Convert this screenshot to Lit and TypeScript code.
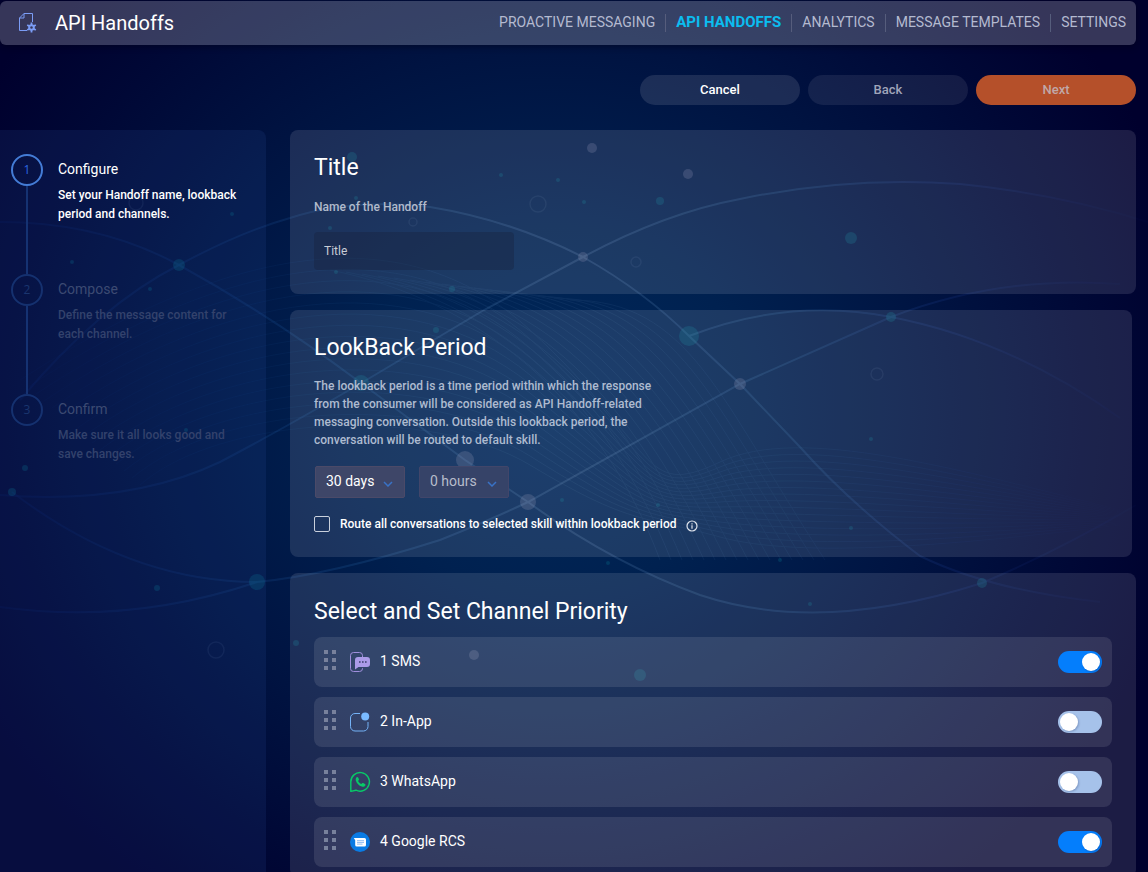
import { LitElement, html, svg, css } from "lit";
import { customElement, property, state } from "lit/decorators.js";
import { classMap } from "lit/directives/class-map.js";

const FAN = Array.from({ length: 16 }, (_, i) => i);

const DOTS: [number, number, number, string][] = [
  [592, 148, 5, "pale"], [688, 174, 5, "pale"], [583, 257, 5, "pale"],
  [740, 384, 6, "pale"], [528, 502, 8, "pale"], [465, 460, 9, "pale"],
  [474, 655, 5, "pale"], [851, 238, 6, "teal"], [689, 336, 10, "teal"],
  [891, 317, 5, "teal"], [361, 383, 8, "teal"], [179, 265, 6, "teal"],
  [257, 582, 8, "teal"], [982, 583, 5, "teal"], [640, 675, 6, "teal"],
  [352, 157, 5, "teal"], [660, 201, 4, "teal"], [356, 198, 2, "teal"],
  [330, 228, 2, "teal"], [336, 272, 2, "teal"], [452, 289, 3, "teal"],
  [501, 175, 2, "teal"], [558, 180, 2, "teal"], [584, 202, 2, "teal"],
  [436, 330, 3, "teal"], [157, 588, 3, "teal"], [296, 643, 3, "teal"],
  [232, 214, 2, "teal"], [150, 289, 2, "teal"], [72, 262, 2, "teal"],
  [658, 505, 2, "teal"], [562, 500, 2, "teal"], [851, 528, 2, "teal"],
  [780, 560, 2, "teal"], [608, 563, 2, "teal"], [810, 604, 2, "teal"],
  [871, 439, 2, "teal"], [25, 468, 3, "teal"], [186, 430, 2, "teal"],
  [12, 492, 4, "teal"],
];

@customElement("network-backdrop")
class NetworkBackdrop extends LitElement {
  static styles = css`
    :host {
      display: block;
      background: radial-gradient(
        ellipse 58% 70% at 48% 47%,
        #00295c 0%,
        #002150 30%,
        #001341 60%,
        #000836 82%,
        #00002d 100%
      );
    }
    svg { display: block; width: 100%; height: 100%; }
    .main { fill: none; stroke: url(#fade); stroke-width: 2; opacity: 0.19; }
    .fine { fill: none; stroke: url(#fade); stroke-width: 1; opacity: 0.08; }
    .pale { fill: #8a8fae; opacity: 0.24; }
    .teal { fill: #0a8fa0; opacity: 0.22; }
    .ring { fill: none; stroke: #6c83b0; stroke-width: 1.5; opacity: 0.12; }
  `;

  render() {
    return html`
      <svg viewBox="0 0 1148 872" preserveAspectRatio="xMidYMid slice" aria-hidden="true">
        <defs>
          <linearGradient id="fade" gradientUnits="userSpaceOnUse" x1="0" y1="0" x2="1148" y2="0">
            <stop offset="0" stop-color="#1438a0" stop-opacity="0.5" />
            <stop offset="0.3" stop-color="#2d74b8" />
            <stop offset="0.5" stop-color="#7fa3cf" />
            <stop offset="0.68" stop-color="#4584bd" />
            <stop offset="0.82" stop-color="#24479f" />
            <stop offset="1" stop-color="#1a2b86" stop-opacity="0.2" />
          </linearGradient>
        </defs>
        <g class="main">
          <path d="M20 400Q100 305 179 265Q240 232 290 218Q350 198 430 207Q510 220 583 257Q645 292 689 336L740 384L800 447Q850 503 920 556Q990 590 1100 602" />
          <path d="M0 495Q130 505 220 462Q300 420 400 360L484 310L583 257Q665 213 740 199Q850 176 960 184Q1060 194 1148 222" />
          <path d="M0 607Q130 625 257 582Q330 575 440 540Q490 520 528 502L740 384L891 317Q1000 275 1120 284" />
          <path d="M12 492Q130 582 257 582" />
          <path d="M689 336Q790 297 891 317Q1010 340 1120 418" />
          <path d="M0 222Q100 222 179 265Q270 315 361 383L465 460L528 502Q610 562 700 595Q820 635 982 583Q1060 550 1136 505" />
        </g>
        <g class="fine">
          ${FAN.map((i) => svg`
            <path d=${`M${20 + i * 8} ${380 + i * 7}C${220} ${250 + i * 11} ${400 + i * 2} ${210 + i * 13} ${530} ${330 + i * 9}S${640} ${500 + i} ${720} ${462 + i * 5}S${960} ${470 + i * 5} ${1120} ${510 + i}`} />
            <path d=${`M${330 + i * 16} ${270 + i * 2}C${480 + i * 14} ${300} ${600 + i * 8} ${400} ${660 + i * 11} ${560}`} />
          `)}
        </g>
        ${DOTS.map(([x, y, r, tone]) => svg`<circle class=${tone} cx=${x} cy=${y} r=${r} />`)}
        <circle class="ring" cx="538" cy="204" r="8" />
        <circle class="ring" cx="636" cy="262" r="5" />
        <circle class="ring" cx="413" cy="222" r="4" />
        <circle class="ring" cx="877" cy="374" r="6" />
        <circle class="ring" cx="216" cy="650" r="8" />
        <circle class="ring" cx="136" cy="203" r="7" />
      </svg>
    `;
  }
}

interface Step { title: string; text: string; }
interface Channel { id: string; name: string; on: boolean; }

const ICONS: Record<string, unknown> = {
  sms: svg`
    <path d="M12.500 5V3.500a3 3 0 0 0-3-3h-6a3 3 0 0 0-3 3v13a3 3 0 0 0 3 3h6a3 3 0 0 0 3-3V16" fill="none" stroke="#a08fdc" />
    <path d="M8 5h9a3 3 0 0 1 3 3v4a3 3 0 0 1-3 3H8.500L5 17.500V8a3 3 0 0 1 3-3z" fill="#ab9be8" />
    <path d="M9 10h1.600M12 10h1.600M15 10h1.600" stroke="#3a3f6b" stroke-width="1.600" />`,
  app: svg`
    <path d="M10 1.500H5A4.500 4.500 0 0 0 .500 6v8.500A4.500 4.500 0 0 0 5 19h8.500a4.500 4.500 0 0 0 4.500-4.500V10" fill="none" stroke="#74b2f6" />
    <circle cx="15.200" cy="4.500" r="4" fill="#7abaff" />`,
  whatsapp: svg`
    <path d="M.800 19.400V10A9.300 9.300 0 1 1 6 18.200z" fill="none" stroke="#08c968" stroke-width="1.400" stroke-linejoin="round" />
    <path d="M6.600 5.200c.5-.5 1.200-.4 1.500.2l.8 1.700c.2.500.1.800-.2 1.100l-.6.800c.8 1.500 1.700 2.400 3.200 3.100l.8-.8c.3-.4.700-.4 1.100-.2l1.700.9c.6.300.7.900.4 1.400-.7 1.300-2 1.700-3.400 1.200-3.200-1.100-5-3-6-5.900-.4-1.300-.1-2.600.7-3.500z" fill="#08c968" />`,
  rcs: svg`
    <circle cx="10" cy="10" r="10" fill="#0a7be4" />
    <path d="M3.800 6h10.700a1.500 1.500 0 0 1 1.500 1.500v5.500a1.500 1.500 0 0 1-1.500 1.500H6.700a1.500 1.500 0 0 1-1.500-1.500V8.200z" fill="#fff" />
    <path d="M7 8.700h7M7 10.400h7M7 12.100h5.500" stroke="#8ebcf2" stroke-width="1" />`,
};

@customElement("channel-row")
class ChannelRow extends LitElement {
  @property() icon = "";
  @property() label = "";
  @property({ type: Boolean }) on = false;

  static styles = css`
    :host {
      display: flex;
      align-items: center;
      box-sizing: border-box;
      height: 50px;
      padding: 0 10px;
      border-radius: 8px;
      background: rgba(255, 255, 255, 0.1);
    }
    .grip {
      display: grid;
      grid-template-columns: 4px 4px;
      grid-auto-rows: 4px;
      gap: 4px;
      margin: 0 14px 4px 0;
      padding: 0;
      border: 0;
      background: none;
      cursor: grab;
    }
    .grip span { background: #78819c; }
    .icon { width: 20px; height: 20px; overflow: visible; }
    label {
      display: flex;
      flex: 1;
      align-items: center;
      justify-content: space-between;
      padding-left: 10px;
      font: 400 14px/20px Roboto, sans-serif;
      color: #fff;
      cursor: pointer;
    }
    .name { padding-bottom: 2px; }
    .toggle {
      appearance: none;
      display: flex;
      box-sizing: border-box;
      width: 44px;
      height: 22px;
      margin: 0;
      padding: 2px;
      border-radius: 11px;
      background: #a6c2ea;
      cursor: pointer;
    }
    .toggle::before {
      content: "";
      width: 18px;
      height: 18px;
      border-radius: 50%;
      background: #fff;
      box-shadow: 1px 1px 2px rgba(20, 40, 90, 0.25);
    }
    .toggle:checked { justify-content: flex-end; background: #047efc; }
  `;

  render() {
    return html`
      <button class="grip" aria-label="Reorder">
        <span></span><span></span><span></span><span></span><span></span><span></span>
      </button>
      <svg class="icon" viewBox="0 0 20 20" aria-hidden="true">${ICONS[this.icon]}</svg>
      <label>
        <span class="name">${this.label}</span>
        <input class="toggle" type="checkbox" role="switch" .checked=${this.on} />
      </label>
    `;
  }
}

@customElement("app-root")
class AppRoot extends LitElement {
  @state() private current = 0;

  private nav = ["PROACTIVE MESSAGING", "API HANDOFFS", "ANALYTICS", "MESSAGE TEMPLATES", "SETTINGS"];

  private steps: Step[] = [
    { title: "Configure", text: "Set your Handoff name, lookback period and channels." },
    { title: "Compose", text: "Define the message content for each channel." },
    { title: "Confirm", text: "Make sure it all looks good and save changes." },
  ];

  private channels: Channel[] = [
    { id: "sms", name: "SMS", on: true },
    { id: "app", name: "In-App", on: false },
    { id: "whatsapp", name: "WhatsApp", on: false },
    { id: "rcs", name: "Google RCS", on: true },
  ];

  static styles = css`
    :host {
      display: block;
      position: relative;
      height: 100vh;
      overflow: hidden;
      font-family: Roboto, sans-serif;
      font-size: 12px;
      color: #fff;
    }
    * { box-sizing: border-box; }
    h1, h2, h3, p, ol { margin: 0; padding: 0; }
    button, input, select { font-family: inherit; }
    network-backdrop { position: absolute; inset: 0; }
    .page {
      position: relative;
      display: flex;
      flex-direction: column;
      height: 100%;
      padding: 1px 12px 0 0;
    }

    .bar {
      display: flex;
      flex: none;
      align-items: center;
      justify-content: space-between;
      height: 44px;
      padding-left: 19px;
      border-radius: 6px;
      background: rgba(255, 255, 255, 0.21);
      box-shadow: 0 2px 6px rgba(0, 0, 20, 0.4);
    }
    .brand { display: flex; align-items: center; gap: 18px; }
    .brand svg { width: 18px; height: 20px; }
    h1 { font-size: 20px; font-weight: 400; line-height: 24px; }
    nav { display: flex; }
    nav a {
      padding: 0 10px 2px;
      border-left: 1px solid #565d7c;
      font-size: 14px;
      line-height: 16px;
      color: #b4bad0;
      text-decoration: none;
    }
    nav a:first-child { border-left: 0; }
    nav a.here { color: #0bbdf0; font-size: 15px; font-weight: 700; }

    .actions {
      display: flex;
      flex: none;
      justify-content: flex-end;
      gap: 8px;
      padding: 30px 0 25px;
    }
    .actions button {
      width: 160px;
      height: 30px;
      padding: 0 0 2px;
      border: 0;
      border-radius: 15px;
      background: rgba(255, 255, 255, 0.11);
      color: #fff;
      font-size: 13px;
      font-weight: 500;
    }
    .actions .back { background: rgba(255, 255, 255, 0.08); color: #a0a5b9; }
    .actions .next { background: #b5502a; color: #c0a8a8; }

    .body { display: flex; flex: 1; gap: 24px; min-height: 0; }
    .steps {
      flex: none;
      width: 266px;
      padding: 24px 0 0 11px;
      border-radius: 0 8px 0 0;
      background: rgba(46, 84, 170, 0.15);
      list-style: none;
    }
    .step { display: grid; grid-template-columns: 32px 180px; column-gap: 15px; height: 120px; }
    .mark { display: flex; flex-direction: column; align-items: center; }
    .num {
      display: flex;
      flex: none;
      align-items: center;
      justify-content: center;
      width: 32px;
      height: 32px;
      border: 2px solid #15316f;
      border-radius: 50%;
      font: 400 12px/16px "Open Sans", sans-serif;
      color: #1a356f;
    }
    .step.now .num { border-color: #447cd6; color: #2d67e0; }
    .line { flex: 1; width: 2px; background: #153272; }
    .step:last-child .line { display: none; }
    .step h3 { padding-top: 5px; font-size: 14px; font-weight: 400; line-height: 20px; color: #3c4a72; }
    .step p { padding-top: 7px; font-weight: 500; line-height: 19px; color: #33426c; }
    .step.now h3, .step.now p { color: #fff; }

    .cards {
      display: flex;
      flex: 1;
      flex-direction: column;
      gap: 16px;
      min-width: 0;
      overflow-y: auto;
      scrollbar-width: none;
    }
    .card {
      flex: none;
      padding: 22px 24px 24px;
      border-radius: 8px;
      background: rgba(245, 250, 255, 0.115);
    }
    h2 { padding-top: 2px; font-size: 23px; font-weight: 400; line-height: 28px; }
    .field { display: grid; justify-items: start; gap: 16px; padding-top: 16px; }
    .field label { font-weight: 500; line-height: 18px; color: #b1bacb; }
    .field input {
      width: 200px;
      height: 38px;
      padding: 0 10px;
      border: 0;
      border-radius: 4px;
      background: rgba(24, 32, 58, 0.35);
      color: #c8cdd6;
      font-size: 12px;
    }
    .lookback { margin-right: 4px; }
    .lookback p { max-width: 344px; padding-top: 15px; font-weight: 500; line-height: 18px; color: #aebbd0; }
    .picks { display: flex; gap: 14px; padding: 17px 0 17px 1px; }
    .pick { display: grid; align-items: center; }
    .pick select, .pick svg { grid-area: 1 / 1; }
    .pick select {
      appearance: none;
      width: 90px;
      height: 32px;
      padding: 0 10px 2px;
      border: 1px solid #4b4a68;
      border-radius: 2px;
      background: #3e4668;
      color: #fff;
      font-size: 14px;
    }
    .pick select.faint { border-color: #41466a; background: #364368; color: #b7bdcb; }
    .pick svg { justify-self: end; width: 10px; height: 6px; margin: 4px 12px 0 0; pointer-events: none; }
    .route { display: flex; align-items: center; gap: 10px; height: 18px; }
    .route input {
      appearance: none;
      width: 16px;
      height: 16px;
      margin: 0;
      border: 1px solid #c9d0dc;
      border-radius: 2px;
    }
    .route label { font-weight: 500; line-height: 18px; }
    .route button { display: flex; padding: 4px 0 0; border: 0; background: none; }
    .route svg { width: 12px; height: 12px; }
    .channels { padding: 23px 24px 10px; }
    .rows { display: grid; gap: 10px; padding-top: 11px; }
  `;

  private chevron = html`<svg viewBox="0 0 10 6" aria-hidden="true">
    <path d="M1 1l4 4 4-4" fill="none" stroke="#3972c6" stroke-width="1.500" />
  </svg>`;

  render() {
    return html`
      <network-backdrop></network-backdrop>
      <div class="page">
        <header class="bar">
          <div class="brand">
            <svg viewBox="0 0 18 20" fill="none" stroke="#7b9cf5" aria-hidden="true">
              <path d="M8 17.500H.500V5L5 .500h8.500V9M5 .500V5H.500" />
              <circle cx="12.500" cy="14.500" r="2.300" stroke-width="2" />
              <path d="M12.500 9.500v2.700M12.500 16.800v2.700M8.200 12l2.300 1.300M14.500 15.700l2.300 1.300M8.200 17l2.300-1.300M14.500 13.300l2.300-1.300" stroke-width="1.800" />
            </svg>
            <h1>API Handoffs</h1>
          </div>
          <nav>
            ${this.nav.map((n) => html`<a href="#" class=${classMap({ here: n === "API HANDOFFS" })}>${n}</a>`)}
          </nav>
        </header>

        <div class="actions">
          <button>Cancel</button>
          <button class="back" disabled>Back</button>
          <button class="next" disabled>Next</button>
        </div>

        <div class="body">
          <ol class="steps">
            ${this.steps.map((s, i) => html`
              <li class=${classMap({ step: true, now: i === this.current })}>
                <div class="mark"><span class="num">${i + 1}</span><span class="line"></span></div>
                <div><h3>${s.title}</h3><p>${s.text}</p></div>
              </li>`)}
          </ol>

          <main class="cards">
            <section class="card">
              <h2>Title</h2>
              <div class="field">
                <label for="name">Name of the Handoff</label>
                <input id="name" type="text" value="Title" />
              </div>
            </section>

            <section class="card lookback">
              <h2>LookBack Period</h2>
              <p>The lookback period is a time period within which the response from the consumer will be considered as API Handoff-related messaging conversation. Outside this lookback period, the conversation will be routed to default skill.</p>
              <div class="picks">
                <div class="pick">
                  <select aria-label="Days"><option>30 days</option></select>${this.chevron}
                </div>
                <div class="pick">
                  <select class="faint" aria-label="Hours"><option>0 hours</option></select>${this.chevron}
                </div>
              </div>
              <div class="route">
                <input id="route" type="checkbox" />
                <label for="route">Route all conversations to selected skill within lookback period</label>
                <button aria-label="More information">
                  <svg viewBox="0 0 12 12" fill="none" stroke="#dfe4ec" aria-hidden="true">
                    <circle cx="6" cy="6" r="5" stroke-width="1.200" />
                    <path d="M6 5.200v3.600M6 3.200v1.200" stroke-width="1.200" />
                  </svg>
                </button>
              </div>
            </section>

            <section class="card channels">
              <h2>Select and Set Channel Priority</h2>
              <div class="rows">
                ${this.channels.map((c, i) => html`
                  <channel-row icon=${c.id} label=${`${i + 1} ${c.name}`} ?on=${c.on}></channel-row>`)}
              </div>
            </section>
          </main>
        </div>
      </div>
    `;
  }
}
